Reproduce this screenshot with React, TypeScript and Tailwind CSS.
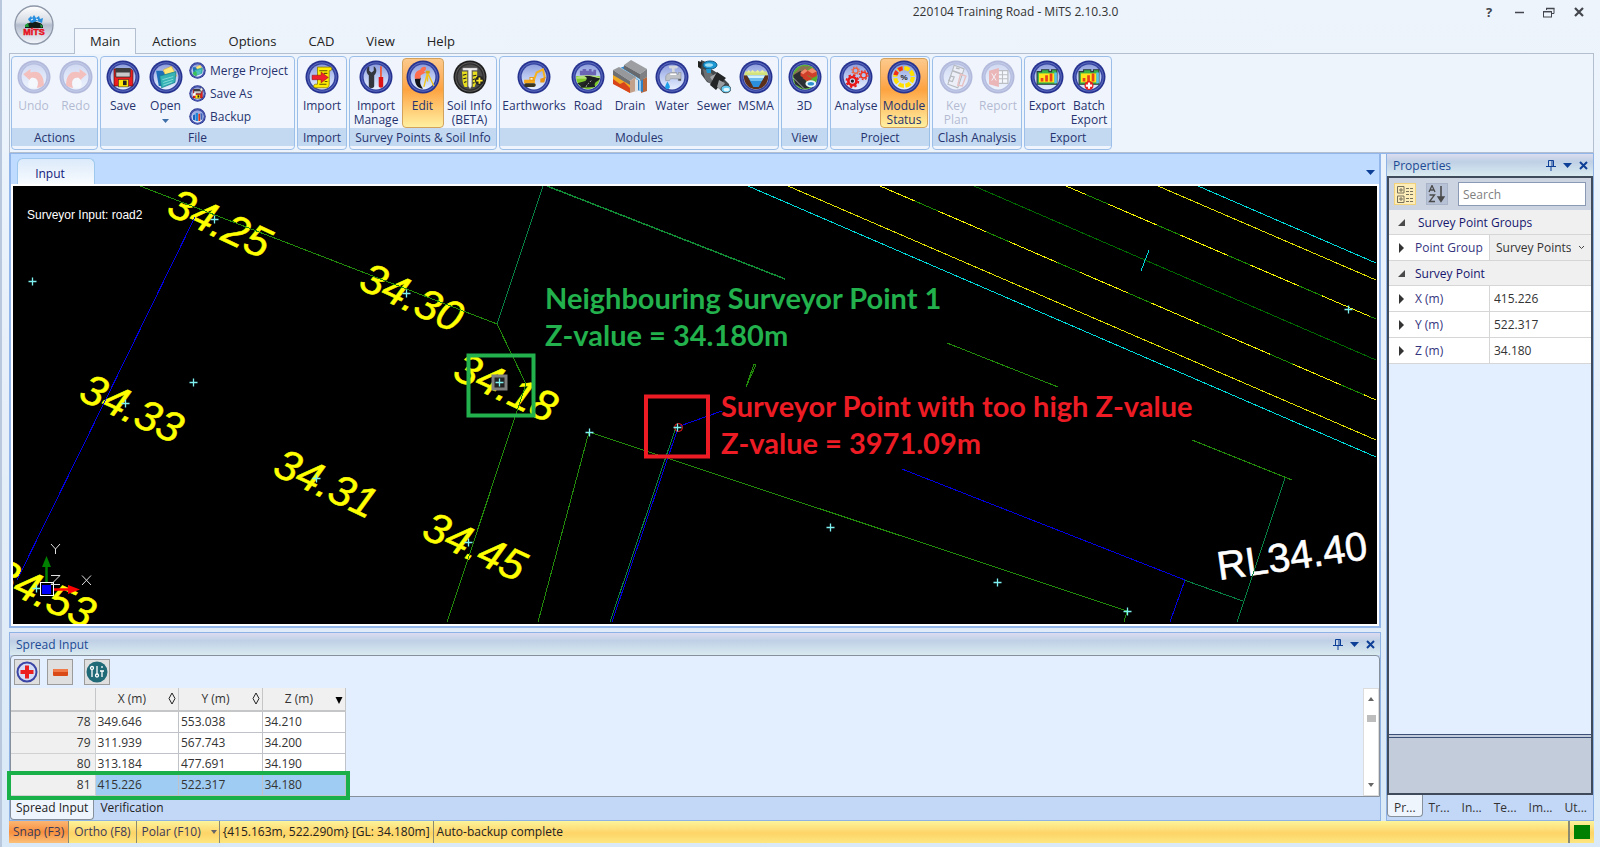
import React from 'react';
import clsx from 'clsx';

/* ---------- icons ---------- */

const Orb: React.FC<{ size?: number; dark?: boolean; children?: React.ReactNode }> = ({ size = 34, dark, children }) => (
  <svg width={size} height={size} viewBox="0 0 34 34" className="shrink-0">
    <defs>
      <linearGradient id="orbFill" x1="0" y1="0" x2="0" y2="1">
        <stop offset="0" stopColor="#8f9fdc" />
        <stop offset="0.5" stopColor="#bccaf2" />
        <stop offset="1" stopColor="#e6effd" />
      </linearGradient>
    </defs>
    <circle cx="17" cy="17" r="16.5" fill={dark ? '#1d1d1d' : '#26328f'} />
    <circle cx="17" cy="17" r="14.8" fill={dark ? '#5c5c5c' : '#5b6bbd'} />
    <circle cx="17" cy="17" r="13.8" fill={dark ? '#2c2c2c' : '#33419f'} />
    <circle cx="17" cy="17" r="12.4" fill={dark ? '#4b4b4b' : 'url(#orbFill)'} />
    <g transform="translate(1.7 1.7) scale(0.9)">{children}</g>
  </svg>
);

const UndoIcon = () => (
  <Orb>
    <path d="M5 14 L13 8 V12 C22 9 28 14 28 26 C25 29 22 29 20 29 C23 22 20 17 14 18 V22 Z" fill="#ff4a30" />
    <path d="M14 18 C20 17 23 22 20 29 H12 C10 26 10 21 14 18 Z" fill="#fff" />
  </Orb>
);

const RedoIcon = () => (
  <Orb>
    <path d="M29 14 L21 8 V12 C12 9 6 14 6 26 C9 29 12 29 14 29 C11 22 14 17 20 18 V22 Z" fill="#ff4a30" />
    <path d="M20 18 C14 17 11 22 14 29 H22 C24 26 24 21 20 18 Z" fill="#fff" />
  </Orb>
);

const Floppy = () => (
  <>
    <path d="M7 8 H26 L28 10 V27 H7 Z" fill="#ee1d1d" stroke="#5b0f0f" strokeWidth="0.8" />
    <path d="M9 8 H25 V17 H9 Z" fill="#c9c9c9" stroke="#222" strokeWidth="0.8" />
    <path d="M9 7 H25 V12 H9 Z" fill="#3d3d3d" />
    <rect x="12" y="20" width="11" height="8" fill="#ffe60a" stroke="#333" strokeWidth="0.6" />
    <rect x="17" y="21" width="4" height="5" fill="#222" />
  </>
);

const SaveIcon = () => <Orb><Floppy /></Orb>;

const FolderArt = () => (
  <>
    <path d="M6 10 H13 L15 12 H18 L14 27 H9 Z" fill="#1c6fb8" />
    <path d="M14 9 L23 5 L29 16 L18 20 Z" fill="#ffe873" stroke="#caa53a" strokeWidth="0.6" />
    <path d="M10 16 L28 11 L27 23 L12 29 Z" fill="#35b3b5" stroke="#167c8c" strokeWidth="0.8" />
    <path d="M13 20 L25 16.500 M14 23 L25 19.500 M14 26 L24 22.500" stroke="#a4e8e6" strokeWidth="0.8" />
  </>
);

const OpenIcon = () => <Orb><FolderArt /></Orb>;
const MergeIcon = () => (
  <Orb size={17}>
    <FolderArt />
    <path d="M6 22 L14 18 L16 28 H9 Z" fill="#3bbf57" />
  </Orb>
);
const SaveAsIcon = () => (
  <Orb size={17}>
    <Floppy />
    <path d="M22 7 L26 4 L29 8 L25 13 Z" fill="#f3f3f3" stroke="#555" />
    <path d="M7 17 L13 14 V22 H7 Z" fill="#fff" />
  </Orb>
);
const BackupIcon = () => (
  <Orb size={17}>
    <path d="M7 24 V14 L12 12 V26 Z" fill="#1660c0" />
    <rect x="13" y="9" width="5" height="18" fill="#1b86d8" />
    <path d="M19 11 H23 V27 H19 Z" fill="#d63920" />
    <path d="M24 9 L28 11 V24 H24 Z" fill="#3a63b8" />
  </Orb>
);

const ImportIcon = () => (
  <Orb>
    <path d="M12 6 H26 C28.500 6 28.500 10 26 10 H25 V25 C25 29 22 29 21 29 H10 C7 29 7 25 10 25 H12 Z" fill="#ffee00" stroke="#8a7a00" strokeWidth="0.9" />
    <path d="M14 10 H23 M19 13 H23 M20 22 H23 M14 25 H22" stroke="#5c5300" strokeWidth="1.200" />
    <path d="M6 15 H16 V11.500 L24 17.500 L16 23.500 V20 H6 Z" fill="#f0202c" stroke="#8d0d14" strokeWidth="0.6" />
  </Orb>
);

const ToolsIcon = () => (
  <Orb>
    <path d="M9.500 5 V10 L12 12 L14.500 10 V5 C19 8 17.500 13 15 15 V27 C15 30 9 30 9 27 V15 C6.500 13 5 8 9.500 5 Z" fill="#33363d" />
    <path d="M21.500 5 H23.500 V17 H21.500 Z" fill="#f05a3c" />
    <path d="M20 17 H25 V27 C25 29.500 20 29.500 20 27 Z" fill="#e01414" />
  </Orb>
);

const EditIcon = () => (
  <Orb>
    <path d="M8 19 C12 17 15 17 14.500 19 C13 23 14 26 17 30 C11 30 8 25 8 19 Z" fill="#15161c" />
    <path d="M8 19 C7 13 10 10 14 9 C15 6 18 5 20 6 C21 8 20 10 18 11 L20 12 L14.500 15 L14 19 Z" fill="#ff6d4f" />
    <path d="M22 12 L18 28 M22 12 L29 27 M22 12 V22" stroke="#f0c418" strokeWidth="1.500" />
    <rect x="20" y="10" width="4.500" height="3" fill="#d8a810" />
  </Orb>
);

const SoilIcon = () => (
  <Orb dark>
    <path d="M8 11 H14 V28 H11 C8 24 9 18 8 11 Z M20 11 H25 V20 L22 28 H20 Z" fill="#e8de20" />
    <path d="M9 15 L13 14 M9.500 19 L13 18 M10.500 23 L13 22 M20 16 L24 15 M20 20 L23 19 M20 24 L22 23" stroke="#222" strokeWidth="1.200" />
    <path d="M9 7 H25 V9.500 H19 V27 L17 30 L15 27 V9.500 H9 Z" fill="#f2f2f2" stroke="#999" strokeWidth="0.500" />
    <circle cx="27.500" cy="21" r="5" fill="#222" />
    <path d="M24 21 H31 M27.500 17.500 V24.500" stroke="#ffe92a" strokeWidth="2" />
  </Orb>
);

const EarthworksIcon = () => (
  <Orb>
    <path d="M6 20 H18 V24 H6 Z" fill="#f6a818" />
    <path d="M12 17 H18 V21 H12 Z" fill="#e89410" />
    <path d="M13 18 H15.500 V20 H13 Z" fill="#fff3c4" />
    <path d="M17 20 L20 12 L27 8.500 L29 18" fill="none" stroke="#f6b21c" strokeWidth="2.200" />
    <path d="M24 19 L30 17 L28.500 23 L24 23 Z" fill="#e89410" />
    <rect x="6" y="24" width="13" height="4" rx="2" fill="#3b3520" />
  </Orb>
);

const RoadIcon = () => (
  <Orb>
    <path d="M4 16 H30 C31 24 25 30.500 17 30.500 C9 30.500 3 24 4 16 Z" fill="#7cc82a" />
    <path d="M4 17 C12 14 22 14 30 17 V19 H4 Z" fill="#b4e07a" />
    <path d="M8 15 V10 H11 V8 H15 V10 H18 V8 H21 V11 H23 V9 H26 V15 Z" fill="#6b63b3" />
    <path d="M13 16 C22 15 24 18 30 18 C31 22 22 21 25 28 L9 29 C8 24 21 20 13 16 Z" fill="#1c2020" />
    <path d="M5 24 L16 21 L10 28 Z" fill="#222826" />
    <path d="M15 28 C15 25 20 23 21 20" stroke="#ddd" strokeWidth="0.800" fill="none" strokeDasharray="2 1.500" />
  </Orb>
);

const DrainIcon = () => (
  <svg width="34" height="34" viewBox="0 0 34 34" className="shrink-0">
    <path d="M0 14 L17 24 V33 L0 23 Z" fill="#f0a921" />
    <path d="M0 19 L7 24 L11 22 L17 28 V33 L0 24 Z" fill="#d9451b" />
    <path d="M28 20 L34 17 V31 L28 33 Z" fill="#b9663a" />
    <path d="M7 8 L12 6 L30 18 V32 L24 30 V20 Z" fill="#2f7fc4" />
    <path d="M8 8.500 L27 20 V31" fill="none" stroke="#a6d8f5" strokeWidth="1.600" />
    <path d="M11 5 L18 0 L34 9 L27 14 Z" fill="#9c9ea1" />
    <path d="M11 5 L27 14 V19 L11 9 Z" fill="#67696c" />
    <path d="M27 14 L34 9 V17 L27 21 Z" fill="#7e8083" />
    <path d="M0 10 L6 7 L23 17 L17 21 Z" fill="#96989b" />
    <path d="M0 10 L17 21 V25 L0 15 Z" fill="#6d6f72" />
    <path d="M17 21 L23 17 V31 L17 33 Z" fill="#c3a08a" />
    <path d="M22 19 L25 20 V31 L22 32 Z" fill="#dfe2e5" />
  </svg>
);

const WaterIcon = () => (
  <Orb>
    <path d="M15 6 H22 M18.500 6 V12" stroke="#d4d8dc" strokeWidth="3" strokeLinecap="round" />
    <path d="M10 21 V18 C10 13 14 13 16 12 H22 V14 H24 V12 H27 V21 H24 V19 H21 C18 19 15 18 14 21 Z" fill="#bfc3c8" stroke="#8c9097" strokeWidth="0.700" />
    <path d="M15 14 H22" stroke="#fff" strokeWidth="1.500" />
    <path d="M24 19 H27 V21 H24 Z" fill="#555a60" />
    <path d="M12 22 C14 26 15 27 14.500 29 C13.500 31 10 31 9.500 29 C9 27 10.500 25 12 22 Z" fill="#1ea0ea" />
  </Orb>
);

const SewerIcon = () => (
  <svg width="34" height="34" viewBox="0 0 34 34" className="shrink-0">
    <path d="M4 0 L9 2 L14 9 L22 14 L32 24 L33 31 L27 33 L19 26 L10 22 L4 14 Z" fill="#45484b" />
    <path d="M6 9 L12 11 L19 18 L14 24 L8 19 Z" fill="#6d7073" />
    <path d="M13 17 L20 13 L23 17 L17 23 Z" fill="#a5a8ab" />
    <path d="M20 12 L29 18 L27 20 L19 30 L13 25 L15 21 Z" fill="#232527" />
    <path d="M22 20 L28 23 L24 30 L20 27 Z" fill="#9a9da0" />
    <ellipse cx="13" cy="5" rx="7" ry="4" fill="#1d9ad6" stroke="#0d5a86" strokeWidth="1" />
    <ellipse cx="12" cy="5" rx="4" ry="1.800" fill="#9edcf4" />
    <path d="M9 9 L14 9 V13 H10 Z" fill="#1d9ad6" />
    <path d="M1 1 L5 2 L4 9 L1 7 Z" fill="#222" />
    <ellipse cx="29" cy="29" rx="5" ry="3.800" fill="#63c9f0" stroke="#333" strokeWidth="0.800" />
    <ellipse cx="29.500" cy="29.500" rx="3" ry="1.800" fill="#e3f8ff" />
  </svg>
);

const MsmaIcon = () => (
  <Orb>
    <path d="M3.500 15 H30.500 C31 24 25 30.500 17 30.500 C9 30.500 3 24 3.500 15 Z" fill="#5b2f1a" />
    <path d="M5 11 H29 L30 15 H4 Z" fill="#d3e27a" />
    <path d="M7 12 L9 9 L11 12 L13 9 L16 12 L19 9 L21 12 L24 9 L27 12 Z" fill="#e8efa0" />
    <path d="M7 15 H27 L20 28 H14 Z" fill="#2c8fdb" />
    <path d="M7 15 H27 L25.500 18 H9 Z" fill="#d3f1fc" />
    <path d="M9 18 H25.500 L23.500 21.500 H11 Z" fill="#6cbcf0" />
  </Orb>
);

const ThreeDIcon = () => (
  <Orb>
    <circle cx="17" cy="17" r="13.700" fill="#58b030" />
    <path d="M4 14 L13 5 L24 5 L6 21 Z" fill="#8a7350" />
    <path d="M4 15 L12 10 L22 29 L15 30 L6 25 Z" fill="#2b2f33" />
    <path d="M4 18 L16 30" stroke="#ddd" strokeWidth="0.800" />
    <path d="M12 12 L17 8 L20 10 V15 L16 18 L12 16 Z M20 10 L25 7 L30 11 V16 L25 18 L20 15 Z M14 18 L19 15 L25 19 L20 22 Z" fill="#cf3f2a" />
    <path d="M12 12 L17 8 L20 10 L15 14 Z M20 10 L25 7 L30 11 L25 13 Z" fill="#f08b6c" />
    <ellipse cx="23.500" cy="24.500" rx="6" ry="3.800" fill="#e9f6fb" />
    <ellipse cx="23.500" cy="24.500" rx="3.600" ry="2" fill="#2b8fd0" />
  </Orb>
);

const GearsIcon = () => (
  <Orb>
    <circle cx="13" cy="21.500" r="4.500" fill="none" stroke="#e81818" strokeWidth="3" />
    <circle cx="13" cy="21.500" r="6.600" fill="none" stroke="#e81818" strokeWidth="2" strokeDasharray="2.600 2.580" />
    <circle cx="13" cy="21.500" r="1.800" fill="#222" />
    <circle cx="25.500" cy="15" r="3.200" fill="none" stroke="#f0301c" strokeWidth="1.600" />
    <circle cx="25.500" cy="15" r="4.800" fill="none" stroke="#f0301c" strokeWidth="1.500" strokeDasharray="1.900 1.870" />
    <circle cx="16.500" cy="10" r="2.800" fill="none" stroke="#f0603c" strokeWidth="1.500" />
    <circle cx="16.500" cy="10" r="4.200" fill="none" stroke="#f0603c" strokeWidth="1.200" strokeDasharray="1.650 1.650" />
  </Orb>
);

const StatusIcon = () => (
  <Orb>
    <circle cx="17" cy="17" r="9.800" fill="none" stroke="#ffe000" strokeWidth="4.600" strokeDasharray="6 1.697" />
    <path d="M7.500 15 A9.800 9.800 0 0 1 9.500 10.700 M11 9.200 A9.800 9.800 0 0 1 15.500 7.300" fill="none" stroke="#f03018" strokeWidth="4.600" />
    <text x="17" y="20" textAnchor="middle" fontSize="9" fontWeight="700" fontFamily="Liberation Sans, sans-serif" fill="#222">%</text>
  </Orb>
);

const KeyPlanIcon = () => (
  <Orb>
    <path d="M15 4 L26 8 L19 29 L8 25 Z" fill="#e4e4ea" stroke="#333" strokeWidth="1.200" />
    <path d="M13 10 L24 14 M17 7 L21 8" stroke="#333" strokeWidth="1.600" />
    <path d="M11 16 L15 17 L13 22 L9 21 Z" fill="none" stroke="#333" strokeWidth="1.300" />
    <path d="M22 14 L28 16 L24 27 L19 26 Z" fill="none" stroke="#d84b40" strokeWidth="1.600" />
  </Orb>
);

const ReportIcon = () => (
  <Orb>
    <path d="M16 10 H28 V24 H16 Z" fill="#fff" stroke="#444" strokeWidth="1.400" />
    <path d="M16 14.500 H28 M16 19 H28 M22 10 V24" stroke="#444" strokeWidth="1.200" />
    <path d="M7 10 L18 7 V28 L7 25 Z" fill="#e0271c" />
    <path d="M10 13 L15 21 M15 13 L10 21" stroke="#fff" strokeWidth="1" />
  </Orb>
);

const MapArt = () => (
  <>
    <path d="M6 11 H11 V9 H19 V11 H22 V9 H28 V25 H6 Z" fill="#3bb54a" stroke="#2b3a3a" strokeWidth="1.200" />
    <path d="M25 12 H28 V24 H25 Z" fill="#56c3ea" />
    <path d="M8 13 H25 V23 H8 Z" fill="#ffe51a" />
    <path d="M10 22 V18 H13 V22 Z M15 22 V15 H18 V22 Z M20 22 V13 H23 V22 Z" fill="#e8411c" />
  </>
);

const ExportIcon = () => <Orb><MapArt /></Orb>;
const BatchIcon = () => (
  <Orb>
    <MapArt />
    <circle cx="17" cy="26.500" r="5" fill="#e81c1c" />
    <path d="M13.500 26.500 H20.500 M17 23 V30" stroke="#fff" strokeWidth="2.400" />
  </Orb>
);

const AppLogo = () => (
  <svg width="40" height="40" viewBox="0 0 40 40">
    <defs>
      <linearGradient id="appOrb" x1="0" y1="0" x2="0" y2="1">
        <stop offset="0" stopColor="#ffffff" />
        <stop offset="0.42" stopColor="#d5dae3" />
        <stop offset="0.5" stopColor="#b3bccd" />
        <stop offset="1" stopColor="#f4f7fc" />
      </linearGradient>
    </defs>
    <circle cx="20" cy="20" r="19" fill="url(#appOrb)" stroke="#8d97a8" strokeWidth="1.300" />
    <path d="M11 21 C13 17 17 19 20 15 C23 19 27 16 29 21 V23 H11 Z" fill="#111d18" />
    <path d="M11 20 L14 18 L15 22 H11 Z M26 19 L29 21 L27 23 Z" fill="#20a03a" />
    <path d="M14 14 L17 11 L18 13 L20 10 L22 13 L25 11 L26 14 L29 13 L28 18 L23 16 L18 18 L15 16 Z" fill="#2b8fe0" />
    <path d="M17 15 L19 14 M22 14 L24 15" stroke="#fff" />
    <text x="20" y="30" textAnchor="middle" fontSize="9" fontWeight="700" fontFamily="Liberation Sans, sans-serif" fill="#e8101c" stroke="#e8101c" strokeWidth="0.500">MiTS</text>
  </svg>
);

/* ---------- ribbon ---------- */

interface ToolProps {
  label: string[];
  icon: React.ReactNode;
  width: string;
  active?: boolean;
  disabled?: boolean;
  drop?: boolean;
}

const Tool: React.FC<ToolProps> = ({ label, icon, width, active, disabled, drop }) => (
  <button
    disabled={disabled}
    className={clsx(
      'flex h-[70px] shrink-0 flex-col items-center rounded-sm border pt-px text-xs leading-[14px] text-[#26336f]',
      width,
      active ? 'border-[#d3a25c] bg-linear-to-b from-[#fcc98b] via-[#fda340] via-45% to-[#fff0a0]' : 'border-transparent',
      disabled && 'opacity-30',
    )}
  >
    {icon}
    <span className="mt-[5px] flex flex-col items-center whitespace-nowrap">
      {label.map((line) => (
        <span key={line}>{line}</span>
      ))}
    </span>
    {drop && (
      <svg width="7" height="4" viewBox="0 0 7 4" className="mt-1.5">
        <path d="M0 0 H7 L3.500 4 Z" fill="#3f6fa8" />
      </svg>
    )}
  </button>
);

const SmallTool: React.FC<{ label: string; icon: React.ReactNode }> = ({ label, icon }) => (
  <button className="flex h-[23px] items-center gap-1 whitespace-nowrap text-xs text-[#26336f]">
    {icon}
    {label}
  </button>
);

const Group: React.FC<{ title: string; width: string; children: React.ReactNode }> = ({ title, width, children }) => (
  <section className={clsx('flex h-[94px] shrink-0 flex-col rounded border border-[#9cbfe9] bg-[#f0f5fd] pt-px pb-[3px]', width)}>
    <div className="flex flex-1 justify-center">{children}</div>
    <h2 className="h-[18px] whitespace-nowrap bg-[#c2d9f1] text-center text-xs leading-5 text-[#26336f]">{title}</h2>
  </section>
);

const Ribbon = () => (
  <div className="flex h-[100px] shrink-0 gap-0.5 overflow-hidden border border-[#b3bfce] bg-[#edf4fc] px-px pt-0.5">
    <Group title="Actions" width="w-[87px]">
      <Tool label={['Undo']} icon={<UndoIcon />} width="w-[42px]" disabled />
      <Tool label={['Redo']} icon={<RedoIcon />} width="w-[42px]" disabled />
    </Group>
    <Group title="File" width="w-[195px]">
      <Tool label={['Save']} icon={<SaveIcon />} width="w-[42px]" />
      <Tool label={['Open']} icon={<OpenIcon />} width="w-[43px]" drop />
      <div className="flex w-[106px] flex-col pt-px pl-0.5">
        <SmallTool label="Merge Project" icon={<MergeIcon />} />
        <SmallTool label="Save As" icon={<SaveAsIcon />} />
        <SmallTool label="Backup" icon={<BackupIcon />} />
      </div>
    </Group>
    <Group title="Import" width="w-[50px]">
      <Tool label={['Import']} icon={<ImportIcon />} width="w-[46px]" />
    </Group>
    <Group title="Survey Points & Soil Info" width="w-[148px]">
      <Tool label={['Import', 'Manage']} icon={<ToolsIcon />} width="w-[51px]" />
      <Tool label={['Edit']} icon={<EditIcon />} width="w-[42px]" active />
      <Tool label={['Soil Info', '(BETA)']} icon={<SoilIcon />} width="w-[52px]" />
    </Group>
    <Group title="Modules" width="w-[280px]">
      <Tool label={['Earthworks']} icon={<EarthworksIcon />} width="w-[66px]" />
      <Tool label={['Road']} icon={<RoadIcon />} width="w-[42px]" />
      <Tool label={['Drain']} icon={<DrainIcon />} width="w-[42px]" />
      <Tool label={['Water']} icon={<WaterIcon />} width="w-[42px]" />
      <Tool label={['Sewer']} icon={<SewerIcon />} width="w-[42px]" />
      <Tool label={['MSMA']} icon={<MsmaIcon />} width="w-[42px]" />
    </Group>
    <Group title="View" width="w-[47px]">
      <Tool label={['3D']} icon={<ThreeDIcon />} width="w-[42px]" />
    </Group>
    <Group title="Project" width="w-[100px]">
      <Tool label={['Analyse']} icon={<GearsIcon />} width="w-[48px]" />
      <Tool label={['Module', 'Status']} icon={<StatusIcon />} width="w-[48px]" active />
    </Group>
    <Group title="Clash Analysis" width="w-[90px]">
      <Tool label={['Key', 'Plan']} icon={<KeyPlanIcon />} width="w-[42px]" disabled />
      <Tool label={['Report']} icon={<ReportIcon />} width="w-[42px]" disabled />
    </Group>
    <Group title="Export" width="w-[88px]">
      <Tool label={['Export']} icon={<ExportIcon />} width="w-[42px]" />
      <Tool label={['Batch', 'Export']} icon={<BatchIcon />} width="w-[42px]" />
    </Group>
  </div>
);

const TitleBar = () => (
  <header className="flex h-[53px] shrink-0 pl-0.5">
    <div className="w-[63px] shrink-0 pt-[5px] pl-[3px]">
      <button aria-label="Application menu"><AppLogo /></button>
    </div>
    <div className="flex flex-1 flex-col">
      <div className="flex h-7 items-start">
        <div className="w-[483px]" />
        <h1 className="flex-1 text-center text-xs leading-6 text-[#333]">220104 Training Road - MiTS 2.10.3.0</h1>
        <div className="flex text-[#44464d]">
          <button className="h-6 w-[30px] text-[13px] leading-6 font-bold" aria-label="Help">?</button>
          <button className="flex h-6 w-[30px] items-center justify-center" aria-label="Minimize">
            <svg width="10" height="10"><path d="M1 5.500 H10" stroke="currentColor" strokeWidth="1.500" /></svg>
          </button>
          <button className="flex h-6 w-[30px] items-center justify-center" aria-label="Restore">
            <svg width="12" height="11" fill="none" stroke="currentColor"><path d="M3.500 3 V1.500 H11 V6.500 H9" /><path d="M3 1.500 H11.500" strokeWidth="1.500" /><rect x="0.500" y="4.500" width="8" height="5.500" /><path d="M0.500 4.700 H8.500" strokeWidth="1.500" /></svg>
          </button>
          <button className="flex h-6 w-[30px] items-center justify-center" aria-label="Close">
            <svg width="10" height="10"><path d="M1 1 L9 9 M9 1 L1 9" stroke="currentColor" strokeWidth="2.200" /></svg>
          </button>
        </div>
      </div>
      <nav className="flex flex-1 text-[13px] text-[#222]">
        <button className="relative z-10 -mb-px border border-b-0 border-[#b3bfce] bg-[#f2f7fe] px-[15px]">Main</button>
        {['Actions', 'Options', 'CAD', 'View', 'Help'].map((tab) => (
          <button key={tab} className="px-4 pt-0.5">{tab}</button>
        ))}
      </nav>
    </div>
  </header>
);

/* ---------- drawing ---------- */

const crosses = [
  [214, 219], [32, 281], [406, 293], [193, 382], [125, 403], [499, 382], [316, 478], [468, 542], [36, 588],
  [589, 432], [677, 427], [830, 527], [997, 582], [1127, 611], [1348, 309],
];

const levels = [
  { text: '34.25', x: 165, y: 214 },
  { text: '34.30', x: 357, y: 288 },
  { text: '34.18', x: 451, y: 378 },
  { text: '34.33', x: 77, y: 399 },
  { text: '34.31', x: 271, y: 474 },
  { text: '34.45', x: 420, y: 537 },
  { text: '34.53', x: -11, y: 584 },
];

const Drawing = () => (
  <svg className="h-full w-full" fill="none" fontFamily="'Liberation Sans', sans-serif">
    <g transform="translate(-13 -186)">
      <g fill="#ffff00" stroke="#ffff00" strokeWidth="0.500" fontSize="43" fontStyle="italic">
        {levels.map((l) => (
          <text key={l.text} x={0} y={0} transform={`translate(${l.x} ${l.y}) rotate(25)`}>{l.text}</text>
        ))}
      </g>
      <text transform="translate(1219 580) rotate(-8)" fill="#fff" stroke="#fff" strokeWidth="0.600" fontSize="40">RL34.40</text>

      <g shapeRendering="crispEdges">
        <g stroke="#228a0a">
          <path d="M140 186 L497 324 L526 384 L447 622" />
          <path d="M538 622 L589 432 L1127 611 L1124 622" />
          <path d="M947 343 L1058 387 M1192 440 L1292 480" />
          <path d="M547 186 L785 279" stroke="#128a35" strokeWidth="1.500" />
          <path d="M754 364 L746 387 L756 365 Z" />
        </g>
        <g stroke="#078043">
          <path d="M543 186 L497 324" />
          <path d="M1285 478 L1237 622 M1184 580 L1243 601" />
          <path d="M676 427 L610 622" />
        </g>
        <g stroke="#0000e0">
          <path d="M195 217 L81 450 L17 580" />
          <path d="M678 428 L612 622 M680 426 L722 411" />
          <path d="M902 469 L1185 580 L1170 622" />
        </g>

        {/* road corridor */}
        <path d="M748 186 L1376 457 M1198 186 L1376 263 M1149 250 L1141 271" stroke="#00d8d8" />
        <path d="M788 186 L1376 440 M1158 186 L1376 280" stroke="#dcdc00" />
        <path d="M974 186 L1376 360" stroke="#006a00" />
        <path d="M880 186 L1376 400 M1066 186 L1376 319" stroke="#1a8a00" />
        <path d="M880 186 L1376 400" stroke="#f0f000" strokeDasharray="52.300 25" strokeDashoffset="14" />
        <path d="M1066 186 L1376 319" stroke="#f0f000" strokeDasharray="52.300 25" strokeDashoffset="31" />
      </g>

      <rect x="493" y="376" width="13" height="13" stroke="#808080" strokeWidth="3" fill="#222" />
      <circle cx="678.500" cy="427.500" r="4" stroke="#f01818" />
      <g stroke="#7ff0f0" strokeWidth="1.300">
        {crosses.map(([x, y]) => (
          <path key={`${x}-${y}`} d={`M${x - 3.5} ${y + 0.5} h8 M${x + 0.5} ${y - 3.5} v8`} />
        ))}
      </g>

      {/* UCS */}
      <path d="M46.500 583 V566" stroke="#008000" strokeWidth="2.500" />
      <path d="M42 567 L46.500 556 L51 567 Z" fill="#008000" />
      <path d="M54 589.500 H69" stroke="#f00" strokeWidth="2.500" />
      <path d="M68 585 L80 589.500 L68 594 Z" fill="#f00" />
      <rect x="40.500" y="582.500" width="13" height="13" stroke="#fff" />
      <rect x="42" y="585" width="9" height="9" fill="#0000ff" />
      <g stroke="#e0e0e0">
        <path d="M51 544 L55.500 549 L60 544 M55.500 549 V554" />
        <path d="M82 575.500 L91 585 M91 575.500 L82 585" />
        <path d="M51 575.500 H60 L51 584.500 H60" />
      </g>

      <rect x="468.500" y="355.500" width="65" height="60" stroke="#22b14c" strokeWidth="4" />
      <rect x="646" y="396.500" width="62" height="60" stroke="#ed1c24" strokeWidth="4" />
    </g>
    <g transform="translate(-13 -186)" fontFamily="Lato, sans-serif" fontWeight="700" fontSize="29">
      <text x="545" y="309" fill="#22b14c">Neighbouring Surveyor Point 1</text>
      <text x="545" y="346" fill="#22b14c">Z-value = 34.180m</text>
      <text x="721" y="417" fill="#ed1c24">Surveyor Point with too high Z-value</text>
      <text x="721" y="454" fill="#ed1c24">Z-value = 3971.09m</text>
    </g>
    <text x="14" y="33" fill="#fff" fontSize="12" fontFamily="Liberation Sans, sans-serif">Surveyor Input: road2</text>
  </svg>
);

const DownArrow: React.FC<{ label: string }> = ({ label }) => (
  <button aria-label={label} className="flex h-4 w-4 items-center justify-center">
    <svg width="9" height="5"><path d="M0 0 H9 L4.500 5 Z" fill="#0d3f97" /></svg>
  </button>
);

const InputPane = () => (
  <section className="flex min-h-0 flex-1 flex-col border-2 border-t-0 border-[#92b6ea] bg-[#bfdbff]">
    <div className="flex h-[30px] shrink-0 items-end justify-between pr-px pl-1.5">
      <button className="h-[26px] w-[78px] rounded-t-md border border-b-0 border-[#9fc8ee] bg-linear-to-b from-[#dceafa] to-[#f7fbff] pt-1 pr-3 text-xs text-[#14197a]">Input</button>
      <span className="pb-1"><DownArrow label="Open documents" /></span>
    </div>
    <div className="flex min-h-0 flex-1 border-2 border-white bg-black">
      <Drawing />
    </div>
  </section>
);

/* ---------- docked panels ---------- */

const PanelHeader: React.FC<{ title: string }> = ({ title }) => (
  <div className="flex h-[22px] shrink-0 items-center justify-between bg-linear-to-b from-[#dcdcf0] via-[#bfd0e6] via-35% to-[#d9eaf0] pr-0.5 pl-1.5 text-xs text-[#1c4a94]">
    <h2 className="pt-0.5">{title}</h2>
    <div className="flex items-center">
      <button aria-label="Pin" className="flex h-4 w-4 items-center justify-center">
        <svg width="10" height="11" fill="none" stroke="#0d3f97"><path d="M2.500 0.500 H7.500 V6.500 H2.500 Z M6 1 V6 M0 6.500 H10 M5 7 V11" /></svg>
      </button>
      <DownArrow label="Panel menu" />
      <button aria-label="Close panel" className="flex h-4 w-4 items-center justify-center">
        <svg width="9" height="9"><path d="M1 1 L8 8 M8 1 L1 8" stroke="#0d3f97" strokeWidth="2" /></svg>
      </button>
    </div>
  </div>
);

const rows = [
  { id: 78, x: '349.646', y: '553.038', z: '34.210' },
  { id: 79, x: '311.939', y: '567.743', z: '34.200' },
  { id: 80, x: '313.184', y: '477.691', z: '34.190' },
  { id: 81, x: '415.226', y: '522.317', z: '34.180' },
];

const HeadCell: React.FC<{ title: string; sorted?: boolean }> = ({ title, sorted }) => (
  <th scope="col" className="h-[23px] border-r border-b-2 border-[#c4c6c8] bg-[#f0f0f0] p-0 font-normal">
    <button className="flex w-full items-center justify-end gap-[22px] pr-0.5">
      {title}
      <svg width="8" height="14" viewBox="0 0 8 14">
        {sorted ? <path d="M0.500 5 H7.500 L4 12 Z" fill="#000" /> : <path d="M4 1 L7 6.500 L4 12 L1 6.500 Z" fill="none" stroke="#222" />}
      </svg>
    </button>
  </th>
);

const SpreadPanel = () => (
  <section className="flex h-[189px] shrink-0 flex-col border border-[#8db2e3] bg-[#c3d8f7]">
    <PanelHeader title="Spread Input" />
    <div className="flex flex-1 flex-col rounded-t border border-[#85909c] bg-[#e3eeff]">
      <div className="flex h-8 shrink-0 items-center gap-[7px] pl-[3px]">
        <button aria-label="Add row" className="flex h-[26px] w-[26px] items-center justify-center border border-[#9b9b9b] bg-[#dfdfdf]">
          <svg width="22" height="22">
            <circle cx="11" cy="11" r="9.500" fill="#d4dcf6" stroke="#3a45a5" strokeWidth="2" />
            <path d="M11 4.500 V17.500 M4.500 11 H17.500" stroke="#ed2020" strokeWidth="4" />
          </svg>
        </button>
        <button aria-label="Delete row" className="flex h-[26px] w-[26px] items-center justify-center border border-[#9b9b9b] bg-[#dfdfdf]">
          <svg width="15" height="7"><rect width="15" height="7" rx="1" fill="#d94a17" /><rect width="15" height="3" rx="1" fill="#f07a48" /></svg>
        </button>
        <button aria-label="Filter settings" className="ml-1 flex h-[26px] w-[26px] items-center justify-center border border-[#9b9b9b] bg-[#dfdfdf]">
          <svg width="22" height="22" fill="none" stroke="#fff" strokeWidth="1.300">
            <circle cx="11" cy="11" r="10.500" fill="#206a78" stroke="none" />
            <path d="M6 9 V16 M11 5 V13 M16 5 V7 M16 10 V16 M14 10 H18" />
            <circle cx="6" cy="7" r="1.500" />
            <circle cx="11" cy="14.500" r="1.500" />
          </svg>
        </button>
      </div>
      <div className="flex flex-1 items-stretch justify-between">
        <div className="relative w-[335px]">
          <table className="w-full table-fixed border-collapse text-xs text-[#333]">
            <thead>
              <tr>
                <th className="w-[84px] border-r border-b-2 border-[#c4c6c8] bg-[#f0f0f0]" aria-label="Row" />
                <HeadCell title="X (m)" />
                <HeadCell title="Y (m)" />
                <HeadCell title="Z (m)" sorted />
              </tr>
            </thead>
            <tbody>
              {rows.map((r) => (
                <tr key={r.id} className={clsx('h-[21px]', r.id === 81 ? 'bg-[#9fccf2]' : 'bg-white')}>
                  <th scope="row" className="border border-l-0 border-[#cfd1d3] bg-[#f0f0f0] py-0 pr-1 text-right font-normal">{r.id}</th>
                  {[r.x, r.y, r.z].map((v) => (
                    <td key={v} className="border border-[#bfc3c7] py-0 pl-0.5">{v}</td>
                  ))}
                </tr>
              ))}
            </tbody>
          </table>
          <div className="pointer-events-none absolute -right-1 -bottom-1 -left-1 h-[29px] border-4 border-[#19b04a]" />
        </div>
        <div className="flex w-4 flex-col items-center justify-between border border-[#dcdcdc] bg-white py-2">
          <div className="flex flex-col items-center gap-3.5">
            <svg width="6" height="4"><path d="M0 4 H6 L3 0 Z" fill="#666" /></svg>
            <div className="h-[7px] w-[9px] bg-[#bdbdbd]" />
          </div>
          <svg width="6" height="4"><path d="M0 0 H6 L3 4 Z" fill="#666" /></svg>
        </div>
      </div>
    </div>
    <div className="flex h-[26px] shrink-0 items-start text-xs text-[#222]">
      <button className="h-[23px] rounded-b border border-t-0 border-[#85909c] bg-[#eef5fd] px-[5px]">Spread Input</button>
      <button className="h-[23px] px-1.5">Verification</button>
    </div>
  </section>
);

const Caret: React.FC<{ open?: boolean }> = ({ open }) => (
  <svg width="9" height="10" className="shrink-0">
    {open ? <path d="M8 1 V8 H1 Z" fill="#4a4a4a" /> : <path d="M2 0 L7 5 L2 10 Z" fill="#333" />}
  </svg>
);

const Category: React.FC<{ title: string; gap: string }> = ({ title, gap }) => (
  <div className={clsx('flex h-[25px] items-center border-b border-[#d6d6d6] bg-[#f0f0f0] pt-px pl-2 text-xs font-medium text-[#16166e]', gap)}>
    <Caret open />
    <h3>{title}</h3>
  </div>
);

const Field: React.FC<{ label: string; children: React.ReactNode }> = ({ label, children }) => (
  <div className="flex h-[26px] border-b border-[#d6d6d6] bg-white text-xs">
    <div className="flex w-[101px] shrink-0 items-center gap-[9px] border-r border-[#d6d6d6] pl-2">
      <Caret />
      <label htmlFor={label} className="whitespace-nowrap text-[#34347e]">{label}</label>
    </div>
    {children}
  </div>
);

const PropertiesPanel = () => (
  <aside className="flex w-[208px] shrink-0 flex-col border border-t-0 border-[#8db2e3] bg-[#c3d8f7]">
    <PanelHeader title="Properties" />
    <div className="flex flex-1 flex-col border-2 border-[#3f4a5a] bg-[#e3eeff]">
      <div className="flex h-8 items-center bg-[#cdd4e1] px-[5px]">
        <button aria-label="Categorized" className="flex h-[22px] w-[22px] items-center justify-center border border-[#f2d27a] bg-[#fdedb8]">
          <svg width="17" height="17" fill="none" stroke="#77705a"><path d="M0.500 0.500 H7 V7 H0.500 Z M0.500 10 H7 V16.500 H0.500 Z M2 4 H6 M4 2 V6 M2 13 H6 M4 11 V15" /><path d="M9 2.500 H12 M13 2.500 H16 M9 5.500 H12 M13 5.500 H16 M9 8.500 H12 M13 8.500 H16 M9 12.500 H12 M13 12.500 H16 M9 15.500 H12 M13 15.500 H16" /></svg>
        </button>
        <button aria-label="Alphabetical" className="ml-2.5 flex h-[22px] w-[22px] items-center justify-center border border-[#a9b4c8] bg-[#b7c2d6]">
          <svg width="18" height="18" fill="none" stroke="#4a4a4a" strokeWidth="1.300"><path d="M1 7 L4 0.500 L7 7 M2 5 H6 M1.500 10 H6.500 L1.500 16.500 H7" /><path d="M13 1 V15" strokeWidth="1.600" /><path d="M10 12 L13 16.500 L16 12 Z" fill="#4a4a4a" /></svg>
        </button>
        <input aria-label="Search" placeholder="Search" className="ml-2.5 h-6 w-0 flex-1 border border-[#8a9ab5] bg-white px-1 text-xs placeholder:text-[#808080]" />
      </div>
      <Category title="Survey Point Groups" gap="gap-3" />
      <Field label="Point Group">
        <div className="relative flex flex-1">
          <select id="Point Group" className="w-full appearance-none bg-[#efefef] pr-5 pl-1.5 text-xs text-[#333]">
            <option>Survey Points</option>
          </select>
          <svg width="7" height="5" className="pointer-events-none absolute top-2.5 right-1.5"><path d="M1 1 L3.500 3.500 L6 1" fill="none" stroke="#444" /></svg>
        </div>
      </Field>
      <Category title="Survey Point" gap="gap-[9px]" />
      {[['X (m)', '415.226'], ['Y (m)', '522.317'], ['Z (m)', '34.180']].map(([label, value]) => (
        <Field key={label} label={label}>
          <input id={label} defaultValue={value} className="w-0 flex-1 pl-1 text-[#333]" />
        </Field>
      ))}
      <div className="mt-auto h-[59px] border-t-4 border-double border-[#3b4f77] bg-[#c3ccda]" />
    </div>
    <div className="flex h-[25px] shrink-0 items-start text-xs text-[#333]">
      {['Pr...', 'Tr...', 'In...', 'Te...', 'Im...', 'Ut...'].map((tab, i) => (
        <button key={tab} className={clsx('h-[22px] shrink-0 px-1.5 pt-1', i === 0 && 'rounded-b border border-t-0 border-[#85909c] bg-[#eef5fd]')}>{tab}</button>
      ))}
    </div>
  </aside>
);

const StatusBar = () => (
  <footer className="flex h-[22px] shrink-0 items-stretch bg-linear-to-b from-[#fdf49a] via-[#fdd467] via-55% to-[#fde680] text-xs text-[#3a3a5a]">
    <button className="border-r border-[#8a8a70] bg-linear-to-b from-[#fbb672] via-[#f78f3c] via-50% to-[#fbc078] px-1">Snap (F3)</button>
    <button className="border-r border-[#8a8a70] px-[5px]">Ortho (F8)</button>
    <button className="flex items-center gap-2.5 border-r border-[#8a8a70] pr-0.5 pl-[5px]">
      Polar (F10)
      <svg width="6" height="4"><path d="M0 0 H6 L3 4 Z" fill="#666" /></svg>
    </button>
    <span className="flex items-center border-r border-[#8a8a70] px-[3px] text-[#222]">{'{415.163m, 522.290m} [GL: 34.180m]'}</span>
    <span className="flex flex-1 items-center px-[3px] text-[#222]">Auto-backup complete</span>
    <span className="flex items-center border-l-2 border-[#8a8a70] px-1">
      <span className="h-3.5 w-4 bg-[#008000]" />
    </span>
  </footer>
);

const App: React.FC = () => (
  <div className="flex h-screen flex-col overflow-hidden border-l-2 border-[#bac8de] bg-linear-to-b from-[#edf4fc] via-[#e6eff9] to-[#d9e9f7] pr-1.5 pb-1 pl-[7px] font-['Open_Sans','Noto_Sans',sans-serif]">
    <TitleBar />
    <Ribbon />
    <main className="flex min-h-0 flex-1 gap-[5px] border-t border-[#92b6ea]">
      <div className="flex min-w-0 flex-1 flex-col gap-1">
        <InputPane />
        <SpreadPanel />
      </div>
      <PropertiesPanel />
    </main>
    <StatusBar />
  </div>
);

export default App;
